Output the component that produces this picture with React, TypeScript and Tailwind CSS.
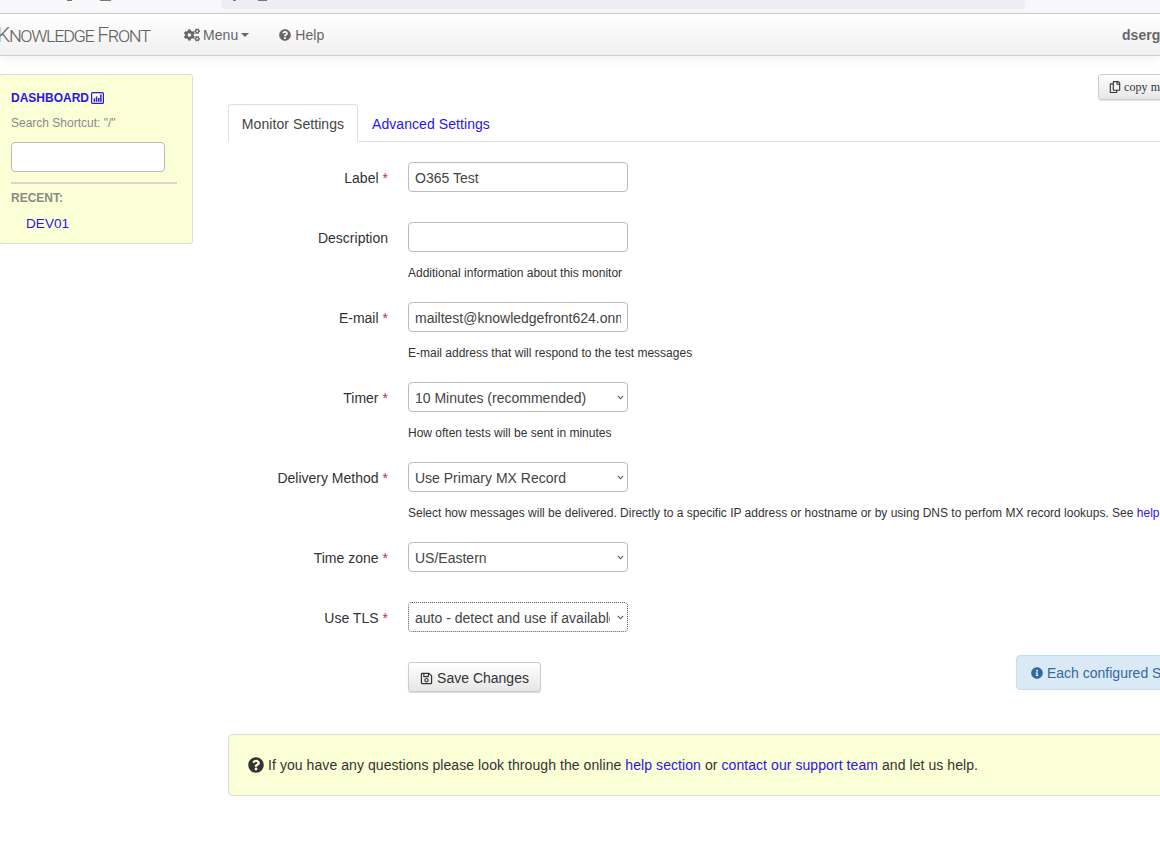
import { ReactNode } from "react";
import { FaCogs, FaQuestionCircle, FaRegCopy, FaRegSave, FaInfoCircle, FaChevronDown } from "react-icons/fa";

const sans = "font-['Liberation_Sans',Arial,sans-serif]";

const FormRow = ({ label, required, help, children }: { label: string; required?: boolean; help?: ReactNode; children: ReactNode }) => (
  <div className="flex mb-[30px]">
    <div className="w-[160px] h-[30px] pt-[1px] leading-[30px] text-right text-[14px] text-[#333] shrink-0 tracking-normal">
      {label}
      {required && <span className="text-[#b8352f] ml-1">*</span>}
    </div>
    <div className="ml-[20px] flex-1 min-w-0">
      {children}
      {help && <p className="text-[12px] leading-[16px] mt-[13px] -mb-[9px] text-[#333] whitespace-nowrap tracking-normal">{help}</p>}
    </div>
  </div>
);

const TextBox = ({ value }: { value?: string }) => (
  <input
    readOnly
    value={value ?? ""}
    className="block w-[220px] h-[30px] px-[6px] pt-[1px] text-[14px] tracking-normal text-[#444] bg-white border border-[#bbb] rounded-[4px] outline-none"
  />
);

const SelectBox = ({ value, dotted }: { value: string; dotted?: boolean }) => (
  <div className="relative w-[220px] h-[30px]">
    <select
      defaultValue={value}
      className={`block w-full h-full pl-[6px] pr-[17px] pt-[2px] text-[14px] tracking-normal text-[#444] bg-white border rounded-[4px] appearance-none outline-none ${
        dotted ? "border-dotted border-[#555]" : "border-[#bbb]"
      }`}
    >
      <option>{value}</option>
    </select>
    <FaChevronDown className="absolute right-[4px] top-[12px] text-[#555]" size={7} />
  </div>
);

const ChartIcon = () => (
  <svg width="13" height="12" viewBox="0 0 13 12" className="text-[#2a15e8]">
    <rect x="0.6" y="0.6" width="11.8" height="10.8" rx="1" fill="none" stroke="currentColor" strokeWidth="1.2" />
    <path d="M2.6 6.5h1.5v3.2H2.6zM4.8 4.6h1.5v5.1H4.8zM7 6h1.5v3.7H7zM9.1 2.6h1.5v7.1H9.1z" fill="currentColor" />
  </svg>
);

export default function App() {
  return (
    <div className={`w-[1160px] h-[842px] overflow-hidden bg-white ${sans} text-[14px] text-[#333] tracking-[0.07px]`}>
      {/* browser chrome, the toolbar is cut off at the top */}
      <div className="h-[14px] bg-[#f8f8fb] border-b border-[#cfcfcf] flex items-start">
        <div className="w-[221px] shrink-0 flex">
          <span className="ml-[67px] w-[5px] h-[1px] bg-[#777]" />
          <span className="ml-[28px] w-[11px] h-[1px] bg-[#777]" />
        </div>
        <div className="w-[804px] h-[9px] bg-[#ededf3] rounded-b-[4px] flex">
          <span className="ml-[12px] w-[3px] h-[1px] bg-[#777]" />
          <span className="ml-[22px] w-[9px] h-[1px] bg-[#777]" />
        </div>
      </div>

      {/* navbar */}
      <div className="h-[42px] flex items-center pt-[1px] bg-gradient-to-b from-white to-[#f0f0f0] border-b border-[#d0d0d0] shadow-[0_3px_10px_rgba(0,0,0,0.06)]">
        <div className="w-[186px] shrink-0 -ml-[3px] text-[21px] leading-none font-['Roboto',sans-serif] font-light text-[#666] [font-variant:small-caps] whitespace-nowrap tracking-[-1.35px]">
          Knowledge Front
        </div>
        <div className="flex items-center gap-[3px] text-[#666] text-[14px] ml-[1px]">
          <FaCogs size={16} />
          <span>Menu</span>
          <span className="w-0 h-0 border-x-[4px] border-x-transparent border-t-[4px] border-t-[#666]" />
        </div>
        <div className="flex items-center gap-[4px] text-[#666] text-[14px] ml-[30px]">
          <FaQuestionCircle size={12} />
          <span>Help</span>
        </div>
        <div className="ml-auto -mr-[40px] w-[78px] font-bold text-[14px] text-[#666]">dsergio</div>
      </div>

      <div className="flex items-start">
        {/* sidebar */}
        <aside className="w-[194px] shrink-0 mt-[18px] -ml-[1px] h-[170px] bg-[#fbffd6] border border-[#dcdcdc] rounded-[3px] pl-[11px] pr-[15px] pt-[15px]">
          <div className="flex items-center gap-[2px] text-[12px] leading-[16px] font-bold text-[#2a15e8] tracking-normal">
            DASHBOARD <ChartIcon />
          </div>
          <div className="mt-[9px] text-[12px] leading-[16px] text-[#8a8a8a] tracking-normal">Search Shortcut: "/"</div>
          <input readOnly className="block mt-[11px] w-[154px] h-[30px] bg-white border border-[#bbb] rounded-[4px] outline-none" />
          <div className="mt-[10px] h-[2px] bg-[#d5d5d5]" />
          <div className="mt-[6px] text-[12px] leading-[16px] font-bold text-[#8a8a8a] tracking-normal">RECENT:</div>
          <div className="mt-[9px] pl-[15px] text-[13.5px] leading-[18px] text-[#2a15e8]">DEV01</div>
        </aside>

        {/* main */}
        <main className="ml-[35px] mt-[18px] w-[1100px] shrink-0">
          <div className="h-[30px]">
            <button className="ml-[870px] w-[180px] h-[26px] flex items-center pl-[10px] gap-[3px] bg-gradient-to-b from-white to-[#e6e6e6] border border-[#ccc] rounded-[3px] shadow-[0_1px_1px_rgba(0,0,0,0.1)] font-['Liberation_Serif',serif] text-[12px] text-[#333] whitespace-nowrap">
              <FaRegCopy size={12} />
              copy monitor
            </button>
          </div>

          {/* tabs */}
          <div className="flex h-[38px] border-b border-[#ddd]">
            <div className="w-[130px] h-[38px] pt-[2px] flex items-center justify-center bg-white border border-[#ddd] border-b-white rounded-t-[4px] text-[#444]">
              Monitor Settings
            </div>
            <div className="ml-[14px] h-[39px] pt-[1px] flex items-center text-[#2a15e8]">Advanced Settings</div>
          </div>

          {/* form */}
          <form className="mt-[20px]">
            <FormRow label="Label" required>
              <TextBox value="O365 Test" />
            </FormRow>
            <FormRow label="Description" help="Additional information about this monitor">
              <TextBox />
            </FormRow>
            <FormRow label="E-mail" required help="E-mail address that will respond to the test messages">
              <TextBox value="mailtest@knowledgefront624.onmicrosoft.com" />
            </FormRow>
            <FormRow label="Timer" required help="How often tests will be sent in minutes">
              <SelectBox value="10 Minutes (recommended)" />
            </FormRow>
            <FormRow
              label="Delivery Method"
              required
              help={
                <>
                  Select how messages will be delivered. Directly to a specific IP address or hostname or by using DNS to perfom MX record lookups. See{" "}
                  <span className="text-[#2a15e8]">help section</span>
                </>
              }
            >
              <SelectBox value="Use Primary MX Record" />
            </FormRow>
            <FormRow label="Time zone" required>
              <SelectBox value="US/Eastern" />
            </FormRow>
            <FormRow label="Use TLS" required>
              <SelectBox value="auto - detect and use if available" dotted />
            </FormRow>

            <div className="flex items-start pl-[180px] h-[30px]">
              <button
                type="button"
                className="w-[133px] h-[30px] pt-[3px] shrink-0 whitespace-nowrap tracking-normal flex items-center justify-center gap-[4px] bg-gradient-to-b from-white to-[#e6e6e6] border border-[#ccc] rounded-[3px] shadow-[0_1px_1px_rgba(0,0,0,0.15)] text-[14px] text-[#333]"
              >
                <FaRegSave size={13} />
                Save Changes
              </button>
              <div className="ml-[475px] -mt-[7px] w-[400px] h-[35px] pt-[1px] shrink-0 flex items-center gap-[4px] pl-[14px] bg-[#d9e9f5] border border-[#bfe0ef] rounded-[4px] text-[#35689d] whitespace-nowrap tracking-normal">
                <FaInfoCircle size={12} />
                Each configured SMTP monitor
              </div>
            </div>
          </form>

          {/* help note */}
          <div className="mt-[42px] w-[1000px] h-[62px] flex items-center gap-[4px] pl-[19px] bg-[#fbffd6] border border-[#dcdcdc] rounded-[4px] text-[#333] whitespace-nowrap">
            <FaQuestionCircle size={16} />
            <span>
              If you have any questions please look through the online <span className="text-[#2a15e8]">help section</span> or{" "}
              <span className="text-[#2a15e8]">contact our support team</span> and let us help.
            </span>
          </div>
        </main>
      </div>
    </div>
  );
}
